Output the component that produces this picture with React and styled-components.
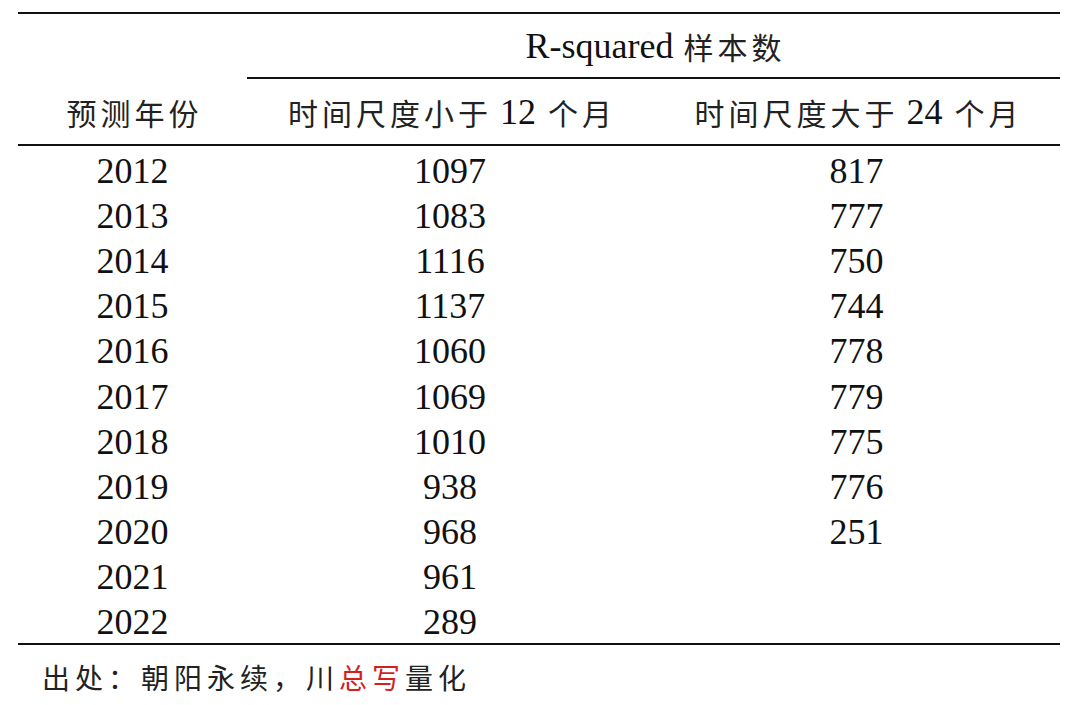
import React from "react";
import styled, { createGlobalStyle } from "styled-components";

const GlobalStyle = createGlobalStyle`
  html, body {
    margin: 0;
    background: #ffffff;
  }
  body {
    font-family: "Liberation Serif", "Noto Sans CJK SC", serif;
    color: #111111;
  }
`;

const Page = styled.div`
  width: 1080px;
  height: 705px;
  padding: 12px 20px 0 18px;
  box-sizing: border-box;
  background: #ffffff;
`;

const Table = styled.div`
  display: grid;
  grid-template-columns: 229px 406px 1fr;
  border-top: 2.5px solid #111;
  border-bottom: 2.5px solid #111;
`;

const Cell = styled.div`
  display: flex;
  align-items: center;
  justify-content: center;
  height: ${(p) => p.$h || 45.2}px;
  font-family: "Liberation Serif", serif;
  font-size: 36px;
  line-height: 1;
  grid-column: ${(p) => p.$span || "auto"};
  border-bottom: ${(p) => (p.$rule ? `${p.$rule}px solid #111` : "none")};
  padding-top: ${(p) => p.$pt || 0}px;
  box-sizing: border-box;
`;

const Cjk = styled.span`
  font-family: "Noto Sans CJK SC", sans-serif;
  font-size: 30px;
  letter-spacing: 4px;
  font-weight: 400;
  color: #222;
  margin-right: ${(p) => (p.$end ? -4 : 0)}px;
`;

const Num = styled.span`
  font-family: "Liberation Serif", serif;
  margin: 0 12px 0 8px;
`;

const Caption = styled.div`
  margin: 12px 0 0 24px;
  font-family: "Noto Sans CJK SC", sans-serif;
  font-size: 28px;
  letter-spacing: 5px;
  color: #222;
`;

const Red = styled.span`
  color: #d41f1f;
`;

const rows = [
  ["2012", "1097", "817"],
  ["2013", "1083", "777"],
  ["2014", "1116", "750"],
  ["2015", "1137", "744"],
  ["2016", "1060", "778"],
  ["2017", "1069", "779"],
  ["2018", "1010", "775"],
  ["2019", "938", "776"],
  ["2020", "968", "251"],
  ["2021", "961", ""],
  ["2022", "289", ""],
];

export default function App() {
  return (
    <>
      <GlobalStyle />
      <Page>
        <Table>
          <Cell $h={65} />
          <Cell $h={65} $span="2 / 4" $rule={2}>
            R-squared<span style={{ width: 10 }} />
            <Cjk $end>样本数</Cjk>
          </Cell>
          <Cell $h={67} $rule={2.5}>
            <Cjk $end>预测年份</Cjk>
          </Cell>
          <Cell $h={67} $rule={2.5}>
            <Cjk>时间尺度小于</Cjk>
            <Num>12</Num>
            <Cjk $end>个月</Cjk>
          </Cell>
          <Cell $h={67} $rule={2.5}>
            <Cjk>时间尺度大于</Cjk>
            <Num>24</Num>
            <Cjk $end>个月</Cjk>
          </Cell>
          {rows.map((r) =>
            r.map((v, i) => (
              <Cell key={r[0] + i} $pt={4}>
                {v}
              </Cell>
            ))
          )}
        </Table>
        <Caption>
          出处：朝阳永续，川<Red>总写</Red>量化
        </Caption>
      </Page>
    </>
  );
}
